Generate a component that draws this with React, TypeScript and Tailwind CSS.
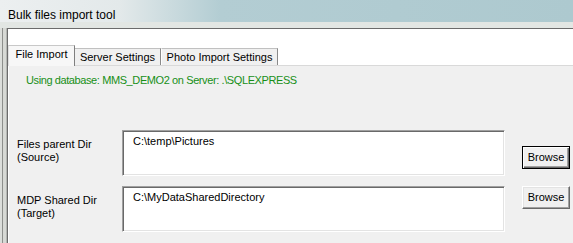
import React from 'react';

interface DirRowProps {
  label: string;
  sub: string;
  value: string;
  buttonOffset: string;
  isDefault?: boolean;
}

function DirRow({ label, sub, value, buttonOffset, isDefault }: DirRowProps) {
  return (
    <div className="flex items-start">
      <div className="w-[105px] pt-[8px] leading-[13px] text-black">
        <div>{label}</div>
        <div>{sub}</div>
      </div>
      <div className="w-[383px] h-[46px] bg-white border border-t-[#a0a0a0] border-l-[#a0a0a0] border-b-white border-r-white shadow-[inset_1px_1px_0_#696969,inset_-1px_-1px_0_#e3e3e3] pl-[10px] pt-[4px] leading-[13px] text-black">
        {value}
      </div>
      <div className={buttonOffset + ' ml-[17px]'}>
        <button
          className={
            'w-[48px] h-[23px] bg-[#f0f0f0] text-black leading-[13px] ' +
            (isDefault
              ? 'border border-black shadow-[inset_1px_1px_0_#ffffff,inset_-1px_-1px_0_#696969,inset_-2px_-2px_0_#a0a0a0]'
              : 'border border-t-white border-l-white border-b-[#696969] border-r-[#696969] shadow-[inset_-1px_-1px_0_#a0a0a0,inset_1px_1px_0_#e3e3e3]')
          }
        >
          Browse
        </button>
      </div>
    </div>
  );
}

export default function App() {
  return (
    <div className="w-[573px] h-[243px] overflow-hidden flex flex-col bg-[#f0f0f0] font-['Liberation_Sans',Arial,sans-serif] text-[11px]">
      {/* Title bar */}
      <div className="h-[28px] shrink-0 flex flex-col bg-[#b0cbd1]">
        <div className="h-[22px] pl-[8px] pt-[7px] bg-[linear-gradient(90deg,#eceff0_0px,#e3e9ea_120px,#b3cdd3_220px,#adc9cf_573px)]">
          <span className="text-[12px] leading-[16px] text-black">Bulk files import tool</span>
        </div>
        <div className="h-[6px] bg-[#e2e6e3]" />
      </div>

      <div className="flex flex-1">
        {/* Left window frame */}
        <div className="w-[7px] shrink-0 bg-[linear-gradient(90deg,#dcdedb_0,#dcdedb_2px,#8d8f8c_2px,#8d8f8c_3px,#d7d9d5_3px,#d7d9d5_6px,#b4b6b3_6px,#b4b6b3_7px)]" />

        {/* Client area */}
        <div className="flex-1 flex flex-col border-t border-l border-[#6b6b6b]">
          {/* Tab strip */}
          <div className="h-[36px] shrink-0 bg-white flex items-end">
            <div className="relative z-10 -mb-px w-[67px] h-[21px] flex items-center justify-center pb-[3px] bg-[#f7f7f7] border-t border-l border-r border-t-[#c8c8c8] border-l-[#e0e0e0] border-r-[#7f7f7f] text-black">
              File Import
            </div>
            <div className="w-[86px] h-[17px] flex items-center justify-center bg-[#f0f0f0] border-t border-r border-t-[#c0c0c0] border-r-[#8a8a8a] text-black">
              Server Settings
            </div>
            <div className="w-[117px] h-[17px] flex items-center justify-center bg-[#f0f0f0] border-t border-l border-r border-t-[#c0c0c0] border-l-white border-r-[#8a8a8a] text-black">
              Photo Import Settings
            </div>
          </div>

          {/* Tab panel */}
          <div className="flex-1 bg-[#f0f0f0] border-t border-l border-t-[#d9d9d9] border-l-white">
            <div className="mt-[8px] ml-[17px] h-[13px] leading-[13px] tracking-[-0.4px] text-[#178f17]">
              {'Using database: MMS_DEMO2 on Server: .\\SQLEXPRESS'}
            </div>
            <div className="mt-[43px] ml-[8px] flex flex-col gap-[10px]">
              <DirRow
                label="Files parent Dir"
                sub="(Source)"
                value={'C:\\temp\\Pictures'}
                buttonOffset="mt-[16px]"
                isDefault
              />
              <DirRow
                label="MDP Shared Dir"
                sub="(Target)"
                value={'C:\\MyDataSharedDirectory'}
                buttonOffset="mt-0"
              />
            </div>
          </div>
        </div>
      </div>
    </div>
  );
}
